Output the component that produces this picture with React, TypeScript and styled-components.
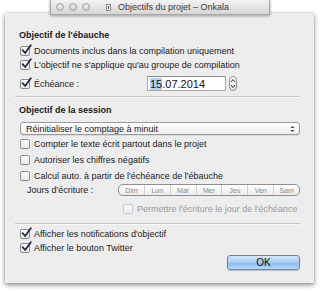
import * as React from 'react'
import styled, {createGlobalStyle} from 'styled-components'

const GlobalStyle = createGlobalStyle`
  html, body {
    margin: 0;
    padding: 0;
    background: #ffffff;
  }
  body {
    font-family: "Liberation Sans", Arial, sans-serif;
    color: #1a1a1a;
  }
`

const Page = styled.div`
  width: 320px;
  height: 291px;
  position: relative;
  overflow: hidden;
  background: #ffffff;
`

const TitleBar = styled.div`
  position: relative;
  z-index: 2;
  margin: 0 50px;
  height: 14px;
  display: flex;
  align-items: center;
  gap: 3px;
  padding-left: 5px;
  background: linear-gradient(#f4f4f4, #d6d6d6);
  border: 1px solid #a8a8a8;
  border-top: none;
  box-shadow: 0 1px 3px rgba(0, 0, 0, 0.35);
  font-size: 9px;
  color: #3a3a3a;
`

const Light = styled.span`
  width: 8px;
  height: 8px;
  border-radius: 50%;
  background: radial-gradient(circle at 50% 35%, #f2f2f2, #bdbdbd);
  border: 1px solid #a5a5a5;
  box-sizing: border-box;
  margin-right: 2px;
`

const DocIcon = styled.span`
  width: 5px;
  height: 7px;
  margin: 0 4px 0 11px;
  background: #fafafa;
  border: 1px solid #8a8a8a;
  box-sizing: border-box;
  position: relative;
  &::after {
    content: '';
    position: absolute;
    left: 1px;
    top: 1px;
    width: 1px;
    height: 3px;
    background: #444;
  }
`

const Sheet = styled.div`
  position: relative;
  z-index: 1;
  margin: -2px 6px 0 5px;
  height: 270px;
  box-sizing: border-box;
  background: #ededed;
  box-shadow: 0 2px 5px rgba(0, 0, 0, 0.45), 0 0 1px rgba(0, 0, 0, 0.3);
  padding: 16px 14px 0 14px;
  display: flex;
  flex-direction: column;
  font-size: 9px;
`

const Heading = styled.div<{$top?: number}>`
  height: 12px;
  line-height: 12px;
  margin-top: ${p => p.$top || 0}px;
  font-weight: bold;
`

const Row = styled.div<{$top?: number; $indent?: number; $h?: number}>`
  display: flex;
  align-items: center;
  height: ${p => p.$h || 14}px;
  margin-top: ${p => p.$top || 0}px;
  padding-left: ${p => p.$indent ?? 1}px;
  white-space: nowrap;
`

const Box = styled.span<{$disabled?: boolean}>`
  position: relative;
  width: 10px;
  height: 10px;
  box-sizing: border-box;
  border-radius: 2px;
  border: 1px solid ${p => (p.$disabled ? '#c9c9c9' : '#8c8c8c')};
  background: linear-gradient(#ffffff, #eaeaea);
  margin-right: 4px;
  flex: none;
`

const Label = styled.span<{$disabled?: boolean; $width?: number}>`
  color: ${p => (p.$disabled ? '#9a9a9a' : '#1a1a1a')};
  width: ${p => (p.$width ? `${p.$width}px` : 'auto')};
`

const Check = () => (
  <svg
    width='11'
    height='11'
    viewBox='0 0 11 11'
    style={{position: 'absolute', left: 0, top: -3}}
  >
    <path
      d='M1.6 6.2 L4.2 9 L9.8 1.2'
      fill='none'
      stroke='#1c2a4a'
      strokeWidth='1.8'
      strokeLinecap='round'
      strokeLinejoin='round'
    />
  </svg>
)

const CheckRow = ({
  label,
  checked,
  top,
  indent,
  disabled,
}: {
  label: string
  checked?: boolean
  top?: number
  indent?: number
  disabled?: boolean
}) => (
  <Row $top={top} $indent={indent}>
    <Box $disabled={disabled}>{checked && <Check />}</Box>
    <Label $disabled={disabled}>{label}</Label>
  </Row>
)

const DateField = styled.div`
  width: 79px;
  height: 15px;
  box-sizing: border-box;
  background: #ffffff;
  border: 1px solid #a9a9a9;
  border-top-color: #8e8e8e;
  display: flex;
  align-items: center;
  padding-left: 2px;
  font-size: 11px;
  color: #111;
`

const Selected = styled.span`
  background: #b4d3fb;
`

const Stepper = styled.div`
  width: 8px;
  height: 15px;
  margin-left: 3px;
  box-sizing: border-box;
  border: 1px solid #8e8e8e;
  border-radius: 4px;
  background: linear-gradient(#ffffff, #e6e6e6);
  display: flex;
  align-items: center;
  justify-content: center;
`

const Separator = styled.div<{$top?: number}>`
  height: 1px;
  background: #c6c6c6;
  border-bottom: 1px solid #f8f8f8;
  margin: ${p => p.$top || 0}px 0 0 -4px;
  width: 285px;
`

const Popup = styled.div`
  margin: 6px 0 0 1px;
  width: 280px;
  height: 13px;
  box-sizing: border-box;
  border: 1px solid #9b9b9b;
  border-radius: 3px;
  background: linear-gradient(#ffffff, #efefef);
  box-shadow: 0 1px 0 rgba(0, 0, 0, 0.08);
  display: flex;
  align-items: center;
  justify-content: space-between;
  padding: 0 4px 0 5px;
`

const Segments = styled.div`
  display: flex;
  width: 182px;
  height: 12px;
  box-sizing: border-box;
  border: 1px solid #8f8f8f;
  border-radius: 5px;
  background: linear-gradient(#ffffff, #ececec);
  overflow: hidden;
`

const Segment = styled.span<{$last?: boolean}>`
  flex: 1;
  display: flex;
  align-items: center;
  justify-content: center;
  font-size: 7px;
  color: #8a8a8a;
  border-right: ${p => (p.$last ? 'none' : '1px solid #cfcfcf')};
`

const Footer = styled.div`
  display: flex;
  justify-content: flex-end;
  margin-top: 0;
`

const OkButton = styled.button`
  width: 73px;
  height: 15px;
  box-sizing: border-box;
  border: 1px solid #5a87c0;
  border-radius: 3px;
  background: linear-gradient(#d3e7fb 0%, #a4ccf3 50%, #86bcf0 55%, #b8dcfb 100%);
  font-family: inherit;
  font-size: 10px;
  color: #111;
  padding: 0;
  box-shadow: 0 1px 1px rgba(0, 0, 0, 0.2);
`

const days = ['Dim', 'Lun', 'Mar', 'Mer', 'Jeu', 'Ven', 'Sam']

export default function App() {
  return (
    <Page>
      <GlobalStyle />
      <TitleBar>
        <Light />
        <Light />
        <Light />
        <DocIcon />
        <span>Objectifs du projet – Onkala</span>
      </TitleBar>
      <Sheet>
        <Heading>Objectif de l'ébauche</Heading>
        <CheckRow top={3} checked label='Documents inclus dans la compilation uniquement' />
        <CheckRow checked label="L'objectif ne s'applique qu'au groupe de compilation" />
        <Row $top={4} $h={15}>
          <Box>
            <Check />
          </Box>
          <Label $width={113}>Échéance :</Label>
          <DateField>
            <Selected>15</Selected>.07.2014
          </DateField>
          <Stepper>
            <svg width='6' height='11' viewBox='0 0 6 11'>
              <path d='M1 4 L3 1.5 L5 4 M1 7 L3 9.5 L5 7' fill='none' stroke='#333' strokeWidth='1' />
            </svg>
          </Stepper>
        </Row>
        <Separator $top={5} />
        <Heading $top={6}>Objectif de la session</Heading>
        <Popup>
          <span>Réinitialiser le comptage à minuit</span>
          <svg width='5' height='8' viewBox='0 0 5 8'>
            <path d='M0.5 3 L2.5 1 L4.5 3 Z M0.5 5 L2.5 7 L4.5 5 Z' fill='#444' />
          </svg>
        </Popup>
        <CheckRow top={2} label='Compter le texte écrit partout dans le projet' />
        <CheckRow top={2} label='Autoriser les chiffres négatifs' />
        <CheckRow top={2} label="Calcul auto. à partir de l'échéance de l'ébauche" />
        <Row $top={1} $h={12} $indent={8}>
          <Label $width={91}>Jours d'écriture :</Label>
          <Segments>
            {days.map((d, i) => (
              <Segment key={d} $last={i === days.length - 1}>
                {d}
              </Segment>
            ))}
          </Segments>
        </Row>
        <CheckRow top={6} indent={104} disabled label="Permettre l'écriture le jour de l'échéance" />
        <Separator $top={7} />
        <CheckRow top={2} checked label="Afficher les notifications d'objectif" />
        <CheckRow checked label='Afficher le bouton Twitter' />
        <Footer>
          <OkButton>OK</OkButton>
        </Footer>
      </Sheet>
    </Page>
  )
}
